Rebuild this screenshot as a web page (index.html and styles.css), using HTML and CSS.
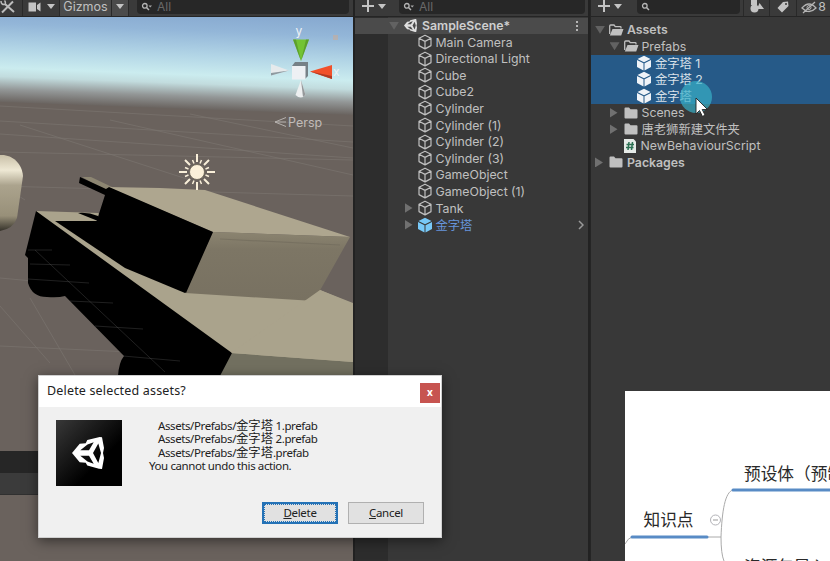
FILE: index.html
```html
<!DOCTYPE html>
<html lang="zh-CN">

<head>
    <meta charset="UTF-8">
    <meta name="viewport" content="width=device-width, initial-scale=1.0">
    <title>Unity Editor</title>
    <link rel="stylesheet" href="styles.css">
</head>
<body>
    <!-- 公用图标 -->
    <svg class="defs" width="0" height="0">
        <symbol id="i-cube" viewBox="0 0 16 16">
            <path d="M8 1.2 14 4.2V11.6L8 14.9 2 11.6V4.2ZM2 4.2 8 7.4 14 4.2M8 7.4V14.9" fill="none" stroke="currentColor" stroke-width="1.2" stroke-linejoin="round"/>
        </symbol>
        <symbol id="i-prefab" viewBox="0 0 16 16">
            <path d="M8 .8 14.5 4 8 7.2 1.5 4ZM1 5 7.5 8.2V15.4L1 12ZM15 5 8.5 8.2V15.4L15 12Z" fill="currentColor"/>
        </symbol>
        <symbol id="i-folder" viewBox="0 0 16 16">
            <path d="M1.5 3.5Q1.5 2.5 2.5 2.5H6L7.5 4.3H13.5Q14.5 4.3 14.5 5.3V12.5Q14.5 13.5 13.5 13.5H2.5Q1.5 13.5 1.5 12.5Z" fill="currentColor"/>
        </symbol>
        <symbol id="i-open" viewBox="0 0 16 16">
            <path d="M1.7 12V4Q1.7 3 2.7 3H6L7.3 4.7H12.2Q13 4.7 13 5.5V6.5" fill="none" stroke="currentColor" stroke-width="1.3"/>
            <path d="M4.5 7H15.5L13.2 13.5H1.8Z" fill="currentColor"/>
        </symbol>
        <symbol id="i-unity" viewBox="0 0 32 32">
            <path fill-rule="evenodd" d="M0 16 7.700 6.700 13.700 6.300 15.300 3 27.700 0 30 .3 32 11 31 16 32 21 30 32 27 31.700 15.300 28.500 13.700 25.700 7.700 25.300ZM8.300 13.200 15.500 7.500 21.700 5.300 17 13.200ZM26.300 6.500 29 16 26.300 26 21 16ZM8.300 18.800H17L21.700 26.700 15.500 24.500Z" fill="currentColor"/>
        </symbol>
        <symbol id="i-search" viewBox="0 0 12 10">
            <circle cx="3.8" cy="3.8" r="2.3" fill="none" stroke="currentColor" stroke-width="1.3"/>
            <path d="M5.5 5.5 8 8" stroke="currentColor" stroke-width="1.5"/>
        </symbol>
    </svg>

    <div class="editor">
        <div class="scene">
            <div class="toolbar scene-bar">
                <span class="tool tool-fix">
                    <svg width="16" height="14" viewBox="0 0 16 14"><path d="M2 12.500 13 1.500M5 4 14 12" fill="none" stroke="#bdbdbd" stroke-width="2"/><path d="M1 1Q1 5 5 4.500 6 2 4.500 .5" fill="none" stroke="#bdbdbd" stroke-width="1.500"/></svg>
                </span>
                <span class="tool tool-cam">
                    <svg width="14" height="10" viewBox="0 0 14 10"><path d="M.5.5H8V9.500H.5ZM9 3 12.500 .5V9.500L9 7Z" fill="#c4c4c4"/></svg>
                    <i class="caret"></i>
                </span>
                <span class="tool tool-gizmos">Gizmos</span>
                <span class="tool tool-more"><i class="caret"></i></span>
                <div class="search search-scene">
                    <svg width="12" height="10"><use href="#i-search"/><path d="M7.500 3.500H11L9.200 5.500Z" fill="#aaa"/></svg>
                    <span>All</span>
                </div>
            </div>
            <svg class="view" width="353" height="434" viewBox="0 17 353 434">
                <defs>
                    <linearGradient id="sky" x1="0" y1="0" x2="0" y2="1">
                        <stop offset="0" stop-color="#86a8cf"/>
                        <stop offset=".2" stop-color="#93b6d8"/>
                        <stop offset=".45" stop-color="#b2d5e6"/>
                        <stop offset=".65" stop-color="#cbecef"/>
                        <stop offset=".74" stop-color="#c2dcde"/>
                        <stop offset=".87" stop-color="#939797"/>
                        <stop offset="1" stop-color="#6a6460"/>
                    </linearGradient>
                    <linearGradient id="capsule" x1="0" y1="0" x2="0" y2="1">
                        <stop offset="0" stop-color="#c9c0a8"/>
                        <stop offset=".2" stop-color="#eee8d4"/>
                        <stop offset=".4" stop-color="#aba38d"/>
                        <stop offset=".8" stop-color="#989079"/>
                        <stop offset="1" stop-color="#35322a"/>
                    </linearGradient>
                    <linearGradient id="side" x1="0" y1="0" x2="0" y2="1">
                        <stop offset="0" stop-color="#8b8470"/>
                        <stop offset=".25" stop-color="#7d7665"/>
                        <stop offset="1" stop-color="#787161"/>
                    </linearGradient>
                    <filter id="soft"><feGaussianBlur stdDeviation=".7"/></filter>
                </defs>
                <rect y="17" width="353" height="434" fill="#6a625d"/>
                <rect y="4" width="353" height="98" fill="url(#sky)" transform="skewY(2.1)"/>
                <!-- 地面网格 -->
                <g fill="none" stroke="#8a8580" stroke-width=".7" opacity=".5">
                    <path d="M0 106 353 126M0 121 353 142M0 134 353 158M0 152 353 160M0 186 353 196M0 278 120 289M0 346 130 352"/>
                    <path d="M20 125 190 180M110 120 353 175M190 114 353 148M0 184 25 200M0 306 50 363M30 298 75 375"/>
                </g>
                <!-- 胶囊 -->
                <path d="M0 155C12 154 22 163 23 176L17 218Q13 229 0 231Z" fill="url(#capsule)"/>
                <!-- 坦克 -->
                <path d="M36 211 98 213 190 290 320 290 353 303V375H220Z" fill="#aaa38c"/>
                <path d="M231 353 353 362V376H220Z" fill="#727060"/>
                <path d="M36 211 232 353 220 376H118Q119 362 124 356L65 296Q58 298 47 297 32 297 28 283L28 258 25 255Z" fill="#000"/>
                <path d="M55 221 98 221 190 283 185 293 125 268Z" fill="#000" filter="url(#soft)"/>
                <path d="M78 213Q88 212 98 216V221Z" fill="#000" filter="url(#soft)"/>
                <path d="M82 177H91L112 187 107 191Z" fill="#8d8672"/>
                <path d="M107 187 160 188 205 190 350 237 213 232Z" fill="#aea68f"/>
                <path d="M213 232 350 237 314 301 185 293Z" fill="url(#side)"/>
                <path d="M80 177 106 189 109 187 213 232 186 293 96 223 105 195 79 183Z" fill="#000"/>
                <path d="M220 239 340 245" stroke="#6c6658" stroke-width="1.200" opacity=".5"/>
                <path d="M320 290 353 304V362L231 353Z" fill="#aaa38c"/>
                <g fill="none" stroke="#666" stroke-width=".8" opacity=".4">
                    <path d="M28 250H52M30 264 70 265M28 279 89 283M70 301 113 303M95 326 143 329M123 356 180 361M35 250 165 372"/>
                </g>
                <!-- 灯光 -->
                <g stroke="#f9efd9" stroke-width="2">
                    <path d="M197 154V162M197 182V190M179 172H187M207 172H215M185 160 190 165M209 160 204 165M185 184 190 179M209 184 204 179"/>
                    <path d="M192.500 160 194 163.500M201.500 160 200 163.500M185 167.500 188.500 169M209 167.500 205.500 169M185 176.500 188.500 175M209 176.500 205.500 175M192.500 184 194 180.500M201.500 184 200 180.500" stroke-width="1.500"/>
                </g>
                <circle cx="197" cy="172" r="7.500" fill="#fbf0d9" stroke="#665f52" stroke-width=".8"/>
                <!-- 坐标轴 -->
                <path d="M293 39.500H309L301 61Z" fill="#73c334"/>
                <path d="M293 39.500H296L301 61ZM306 39.500H309L301 61Z" fill="#529029" opacity=".7"/>
                <path d="M310 71.500 332 65V79Z" fill="#f2502a"/>
                <path d="M310 71.500 332 76V79Z" fill="#b03b24"/>
                <path d="M289 70.500 271 64V75.500Z" fill="#e6eaec"/>
                <path d="M289 70.500 271 73V75.500Z" fill="#8e9aa0"/>
                <path d="M301 80 305.500 95Q301 100 295.500 95Z" fill="#edeff0"/>
                <path d="M301 80 305.500 95 303 97Z" fill="#95999b"/>
                <path d="M292 66 295 62H308V76L305 79Z" fill="#768087"/>
                <path d="M292 66H305.500V79.500H292Z" fill="#eef0f4"/>
                <text x="295.500" y="35" class="axis">y</text>
                <text x="333" y="76" class="axis">x</text>
                <rect x="333" y="35" width="5" height="5" fill="#c8ab99" opacity=".6"/>
                <path d="M286 117.500 275 122 286 126.500M275 122H286" fill="none" stroke="#b6b2af" stroke-width="1"/>
                <text x="288" y="127" class="persp">Persp</text>
            </svg>
            <div class="tab-strip"></div>
            <div class="game-bar"></div>
        </div>

        <div class="hierarchy">
            <div class="toolbar">
                <span class="plus"></span><i class="caret"></i>
                <div class="search search-hier">
                    <svg width="12" height="10"><use href="#i-search"/><path d="M7.500 3.500H11L9.200 5.500Z" fill="#aaa"/></svg>
                    <span>All</span>
                </div>
            </div>
            <div class="tree">
                <div class="row root"><i class="arrow open"></i><svg class="unity" width="13" height="13"><use href="#i-unity"/></svg><b>SampleScene*</b><span class="dots"><i></i><i></i><i></i></span></div>
                <div class="row"><svg class="icon"><use href="#i-cube"/></svg><span>Main Camera</span></div>
                <div class="row"><svg class="icon"><use href="#i-cube"/></svg><span>Directional Light</span></div>
                <div class="row"><svg class="icon"><use href="#i-cube"/></svg><span>Cube</span></div>
                <div class="row"><svg class="icon"><use href="#i-cube"/></svg><span>Cube2</span></div>
                <div class="row"><svg class="icon"><use href="#i-cube"/></svg><span>Cylinder</span></div>
                <div class="row"><svg class="icon"><use href="#i-cube"/></svg><span>Cylinder (1)</span></div>
                <div class="row"><svg class="icon"><use href="#i-cube"/></svg><span>Cylinder (2)</span></div>
                <div class="row"><svg class="icon"><use href="#i-cube"/></svg><span>Cylinder (3)</span></div>
                <div class="row"><svg class="icon"><use href="#i-cube"/></svg><span>GameObject</span></div>
                <div class="row"><svg class="icon"><use href="#i-cube"/></svg><span>GameObject (1)</span></div>
                <div class="row parent"><i class="arrow"></i><svg class="icon"><use href="#i-cube"/></svg><span>Tank</span></div>
                <div class="row parent prefab"><i class="arrow"></i><svg class="icon"><use href="#i-prefab"/></svg><span>金字塔</span><svg class="enter" width="6" height="10" viewBox="0 0 6 10"><path d="M1 1 5 5 1 9" fill="none" stroke="#999" stroke-width="1.500"/></svg></div>
            </div>
        </div>

        <div class="project">
            <div class="toolbar">
                <span class="plus"></span><i class="caret"></i>
                <div class="search search-proj">
                    <svg width="12" height="10"><use href="#i-search"/></svg>
                </div>
                <span class="tool filter"><svg width="14" height="13" viewBox="0 0 14 13"><path d="M1 0H7V5H1ZM9.500 3 14 9H7Z" fill="#c4c4c4"/><circle cx="4.500" cy="8.500" r="4" fill="#c4c4c4"/></svg></span>
                <span class="tool filter"><svg width="12" height="12" viewBox="0 0 12 12"><path d="M6 1 11 .5 11.500 5 5 11.500 .5 7Z" fill="#c4c4c4"/><circle cx="9" cy="3" r="1" fill="#3a3a3a"/></svg></span>
                <span class="tool hidden"><svg width="16" height="13" viewBox="0 0 16 13"><path d="M1 7Q8-1 15 7 8 14 1 7ZM2 12 14 1" fill="none" stroke="#b4b4b4" stroke-width="1.300"/><circle cx="8" cy="6.500" r="2" fill="none" stroke="#b4b4b4"/></svg>8</span>
            </div>
            <div class="tree">
                <div class="row l1"><i class="arrow open"></i><svg class="icon"><use href="#i-open"/></svg><b>Assets</b></div>
                <div class="row l2"><i class="arrow open"></i><svg class="icon"><use href="#i-open"/></svg><span>Prefabs</span></div>
                <div class="row l3 selected"><svg class="icon"><use href="#i-prefab"/></svg><span>金字塔 1</span></div>
                <div class="row l3 selected"><svg class="icon"><use href="#i-prefab"/></svg><span>金字塔 2</span></div>
                <div class="row l3 selected"><svg class="icon"><use href="#i-prefab"/></svg><span>金字塔</span></div>
                <div class="row l2"><i class="arrow"></i><svg class="icon"><use href="#i-folder"/></svg><span>Scenes</span></div>
                <div class="row l2"><i class="arrow"></i><svg class="icon"><use href="#i-folder"/></svg><span>唐老狮新建文件夹</span></div>
                <div class="row l2 file"><svg class="icon" viewBox="0 0 16 16"><path d="M2 1H11.500L14 3.500V15H2Z" fill="#e6ebe8"/><path d="M7 4 6 12M10.500 4 9.500 12M4.500 6.500H12M4 9.500H11.500" stroke="#2c7153" stroke-width="1.500"/></svg><span>NewBehaviourScript</span></div>
                <div class="row l1"><i class="arrow"></i><svg class="icon"><use href="#i-folder"/></svg><b>Packages</b></div>
            </div>
        </div>
    </div>

    <!-- 思维导图 -->
    <div class="mindmap">
        <svg width="205" height="170" viewBox="0 0 205 170">
            <path d="M0 153Q3 147 7 146M82 146H96M96 146C97 120 100 101 108 99M96 146Q96 163 99 170" fill="none" stroke="#aaa" stroke-width="1"/>
            <path d="M7 146H82M108 99H205" stroke="#588bc5" stroke-width="3" stroke-linecap="round"/>
            <circle cx="90.500" cy="129" r="5" fill="#fff" stroke="#b3b3b8"/>
            <path d="M88 129H93" stroke="#999"/>
            <text x="18.500" y="135">知识点</text>
            <text x="119" y="89">预设体（预制体）</text>
            <text x="119" y="182">资源包导入与导出</text>
        </svg>
    </div>

    <div class="click"></div>
    <svg class="cursor" width="14" height="21" viewBox="0 0 14 21"><path d="M1 1V17L4.500 13.500 7.500 19.500 10 18 7.200 12.500H12.500Z" fill="#fff" stroke="#222" stroke-width=".9"/></svg>

    <div class="dialog">
        <div class="title"><span>Delete selected assets?</span><span class="close">x</span></div>
        <div class="content">
            <div class="logo"><svg width="32" height="32"><use href="#i-unity"/></svg></div>
            <div class="message">
                <p class="path">Assets/Prefabs/<span class="cn">金字塔</span> 1.prefab</p>
                <p class="path">Assets/Prefabs/<span class="cn">金字塔</span> 2.prefab</p>
                <p class="path">Assets/Prefabs/<span class="cn">金字塔</span>.prefab</p>
                <p>You cannot undo this action.</p>
            </div>
        </div>
        <div class="buttons">
            <button class="btn primary"><span><u>D</u>elete</span></button>
            <button class="btn"><span><u>C</u>ancel</span></button>
        </div>
    </div>
</body>
</html>
```
FILE: styles.css
```css
*{
    margin: 0;
    padding: 0;
    box-sizing: border-box;
}
body{
    width: 830px;
    height: 561px;
    overflow: hidden;
    position: relative;
    background: #383838;
    font-family: Inter, "Noto Sans CJK SC", sans-serif;
    font-size: 12.3px;
    color: #c0c0c0;
}
.defs{
    position: absolute;
}
.editor{
    display: grid;
    grid-template-columns: 353px 237px 240px;
    height: 561px;
}

/* 工具栏 */
.toolbar{
    display: flex;
    align-items: flex-start;
    height: 17px;
    background: #3a3a3a;
    border-bottom: 1px solid #252525;
    line-height: 14px;
    white-space: nowrap;
}
.tool{
    display: flex;
    align-items: center;
    justify-content: center;
    height: 16px;
    padding-bottom: 3px;
    border-right: 1px solid #292929;
}
.tool-fix{
    width: 23px;
    justify-content: flex-start;
}
.tool-cam{
    width: 37px;
    gap: 5px;
}
.tool-gizmos{
    width: 52px;
    padding-bottom: 2px;
    background: #4b4b4b;
    font-size: 12.5px;
}
.tool-more{
    width: 17px;
    background: #4b4b4b;
}
.caret{
    border: 4px solid transparent;
    border-top: 5px solid #c4c4c4;
    border-bottom: 0;
}
.toolbar > .caret{
    margin-top: 4px;
}
.search{
    display: flex;
    align-items: center;
    gap: 4px;
    height: 14px;
    padding: 0 4px;
    border-radius: 0 0 4px 4px;
    background: #272727;
    color: #696969;
    font-size: 12px;
}
.search svg{
    color: #b5b5b5;
}
.search-scene{
    width: 212px;
    margin-left: 8px;
}
.search-hier{
    width: 186px;
    margin-left: 13px;
}
.search-proj{
    width: 103px;
    margin-left: 15px;
}
.plus{
    width: 12px;
    height: 12px;
    margin: 0 4px 0 7px;
    background: linear-gradient(#c4c4c4, #c4c4c4) center / 12px 2px no-repeat,
                linear-gradient(#c4c4c4, #c4c4c4) center / 2px 12px no-repeat;
}
.filter{
    width: 27px;
}
.hidden{
    width: 33px;
    gap: 1px;
    padding-bottom: 2px;
    border-right: 0;
}
.search-proj + .filter{
    margin-left: 3px;
    border-left: 1px solid #292929;
}

/* 场景 */
.scene{
    background: #6a625d;
}
.view{
    display: block;
}
.axis{
    font-size: 12px;
    fill: #eef2f5;
}
.persp{
    font-size: 12.5px;
    fill: #c0bbb8;
}
.tab-strip{
    height: 22px;
    background: #262626;
}
.game-bar{
    height: 22px;
    background: #3b3b3b;
    border-bottom: 1px solid #303030;
}

/* 层级和项目面板 */
.hierarchy{
    border-left: 2px solid #222;
    border-right: 2px solid #222;
    background: linear-gradient(to right, #2d2d2d 33px, #383838 33px);
}
.row{
    display: flex;
    align-items: center;
    height: 16.6px;
    padding-left: 61.5px;
    white-space: nowrap;
}
.icon{
    width: 16px;
    height: 16px;
    margin-right: 3px;
    flex: none;
}
.arrow{
    width: 8px;
    height: 10px;
    margin-right: 5px;
    background: #707070;
    clip-path: polygon(0 0, 100% 50%, 0 100%);
}
.arrow.open{
    width: 10px;
    height: 8px;
    background: #626262;
    clip-path: polygon(0 0, 100% 0, 50% 100%);
}
.hierarchy .root{
    height: 16px;
    padding-left: 34px;
    background: #4b4b4b;
    color: #d0d0d0;
}
.hierarchy .tree{
    padding-top: .8px;
}
.root .unity{
    margin-right: 5px;
    color: #e0e0e0;
}
.row b{
    font-weight: 600;
}
.dots{
    display: grid;
    gap: 2px;
    margin-left: auto;
    margin-right: 10px;
}
.dots i{
    width: 2px;
    height: 2px;
    background: #b5b5b5;
}
.hierarchy .parent{
    padding-left: 49.5px;
}
.hierarchy .parent .arrow{
    margin-right: 4px;
}
.prefab{
    color: #6795dc;
}
.prefab .icon{
    color: #78c9f8;
}
.enter{
    margin-left: auto;
    margin-right: 4px;
}
.project{
    border-left: 1px solid #252525;
    background: #383838;
}
.project .tree{
    padding-top: 4.4px;
}
.l1{
    padding-left: 4px;
}
.l2{
    padding-left: 18.5px;
}
.l3{
    padding-left: 45px;
}
.project .arrow{
    margin-right: 5px;
}
.project .arrow.open{
    margin-right: 3px;
}
.project .file{
    padding-left: 30.5px;
}
.file span{
    letter-spacing: .06px;
}
.selected{
    background: #265a88;
    color: #d9e1e8;
}
.selected .icon{
    color: #eff3f8;
}

/* 思维导图 */
.mindmap{
    position: absolute;
    left: 625px;
    top: 391px;
    background: #fff;
}
.mindmap svg{
    display: block;
}
.mindmap text{
    font-family: "Noto Sans CJK SC", sans-serif;
    font-size: 16.7px;
    fill: #292929;
}

/* 鼠标 */
.click{
    position: absolute;
    left: 680px;
    top: 81px;
    width: 32px;
    height: 32px;
    border-radius: 50%;
    background: rgba(55, 175, 200, 0.7);
}
.cursor{
    position: absolute;
    left: 695px;
    top: 97px;
}

/* 删除对话框 */
.dialog{
    position: absolute;
    left: 38px;
    top: 375px;
    width: 404px;
    height: 163px;
    border: 1px solid #d0d0d0;
    background: #f0f0f0;
    box-shadow: 0 3px 12px rgba(0, 0, 0, 0.5);
    color: #222;
    font-family: "Noto Sans", "Noto Sans CJK SC", sans-serif;
    font-size: 11.5px;
}
.title{
    display: flex;
    justify-content: space-between;
    height: 31px;
    padding-left: 8px;
    background: #fff;
    font-size: 12.5px;
    letter-spacing: .17px;
    line-height: 30px;
}
.close{
    width: 20px;
    height: 20px;
    margin-top: 7px;
    margin-right: 1px;
    background: #c75450;
    color: #fff;
    font-size: 10px;
    font-weight: bold;
    line-height: 18px;
    text-align: center;
}
.content{
    display: flex;
    height: 95px;
    padding: 13px 0 0 17px;
}
.logo{
    display: flex;
    align-items: center;
    justify-content: center;
    width: 66px;
    height: 66px;
    padding-right: 3px;
    background: linear-gradient(135deg, #383838, #000 65%);
    color: #fff;
}
.message{
    margin-top: -1px;
    margin-left: 27px;
    letter-spacing: -.4px;
    line-height: 13.4px;
}
.message p{
    height: 13.4px;
    white-space: nowrap;
}
.message .path{
    padding-left: 9px;
}
.cn{
    font-size: 12.3px;
    letter-spacing: 0;
    line-height: 1;
}
.buttons{
    display: flex;
    justify-content: flex-end;
    gap: 10px;
    padding-right: 17px;
}
.btn{
    width: 76px;
    height: 22px;
    border: 1px solid #b0b0b0;
    background: #e1e1e1;
    color: #222;
    font-family: inherit;
    font-size: 11.5px;
    letter-spacing: -.3px;
    line-height: 18px;
}
.primary{
    border: 2px solid #2472b6;
    outline: 1px dotted #2472b6;
    outline-offset: -3px;
}
```
